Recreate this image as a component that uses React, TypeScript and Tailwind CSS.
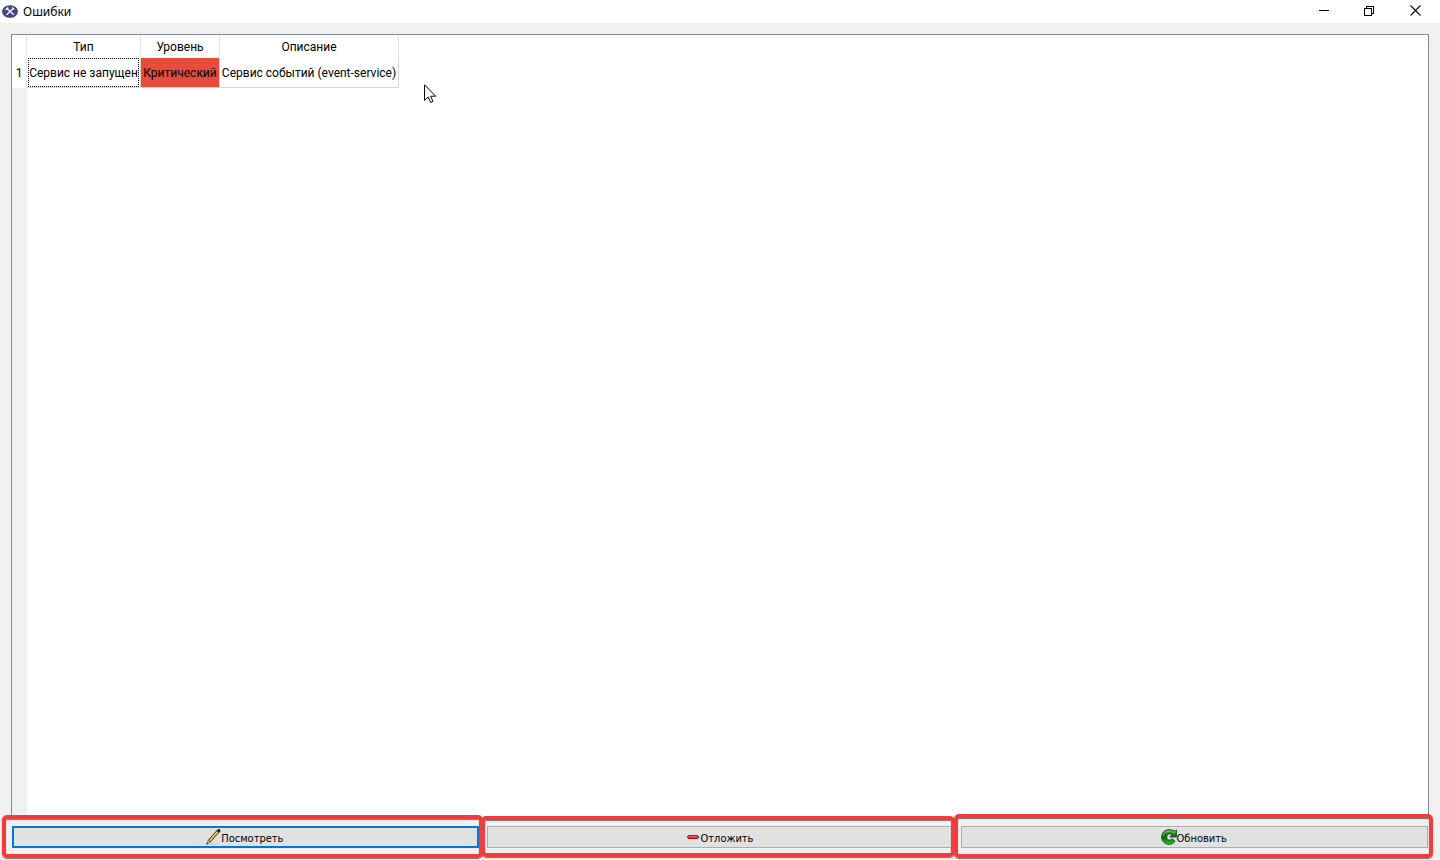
import React from "react";

const rows = [
    {
        type: "Сервис не запущен",
        level: "Критический",
        description: "Сервис событий (event-service)",
    },
];

function AppIcon() {
    return (
        <svg width="16" height="14" viewBox="0 0 16 14" aria-hidden="true">
            <ellipse cx="8" cy="6.500" rx="8" ry="6.3" fill="#45457d" />
            <path d="M5 3.500l6.8 6.2M11.200 3.500L4.600 9.700" stroke="#f4f4fa" strokeWidth="1.4" />
            <path d="M3.8 4.900l2.4-2.4M10.200 2.500l1.800 2" stroke="#f4f4fa" strokeWidth="1.5" />
        </svg>
    );
}

function PencilIcon() {
    return (
        <svg width="16" height="16" viewBox="0 0 16 16" aria-hidden="true">
            <path d="M4 15.300h6l3-1" stroke="#c9c9c9" fill="none" />
            <path d="M3.300 11.2L12.2 1.2l2 1.700L5.400 12.900z" fill="#d9a62e" stroke="#3c2f10" strokeWidth=".9" />
            <path d="M4.400 11.900l8.400-9.500" stroke="#fbe28b" strokeWidth=".9" />
            <path d="M11.5 1.8L13.200 0h1.3l.8 1v1.2l-1.4 1.6z" fill="#252525" />
            <path d="M3.300 11.2l2.100 1.900L1.700 15.2z" fill="#e8cfa0" stroke="#4a3b1d" strokeWidth=".6" />
            <path d="M1.400 15.400l.7-1.6 1 .9z" fill="#111" />
        </svg>
    );
}

function MinusIcon() {
    return (
        <svg width="16" height="16" viewBox="0 0 16 16" aria-hidden="true">
            <rect x="2.500" y="6.500" width="11" height="3" rx="1.500" fill="#e02a35" stroke="#b8101c" />
            <path d="M4 7.500h8" stroke="#ee6b70" />
        </svg>
    );
}

function RefreshIcon() {
    return (
        <svg width="16" height="16" viewBox="0 0 16 16" aria-hidden="true">
            <defs>
                <linearGradient id="leaf" x1="0" y1="0" x2="0" y2="1">
                    <stop offset="0" stopColor="#4fa552" />
                    <stop offset=".5" stopColor="#0d5c15" />
                    <stop offset="1" stopColor="#22cf1c" />
                </linearGradient>
            </defs>
            <path
                d="M13.2 2.2L15.6.9V8H8.8l2.100-2.100C10.300 5.200 9.500 4.900 8.600 4.900 6.900 4.900 5.700 6.300 5.700 8s1.200 3.100 2.900 3.100c1.100 0 2-.4 2.600-1.200l2.900 2.200c-1.300 2.100-3.400 3.300-6 3.300C3.900 15.400.6 12.200.6 8.100S3.800.6 8 .6c2 0 3.800.5 5.200 1.600z"
                fill="url(#leaf)"
                stroke="#17581b"
                strokeWidth=".9"
            />
            <path d="M2 7C2.500 4 5 2.200 8 2.200c1.900 0 3.400.6 4.500 1.700L14.500 2.700" stroke="#9bd198" strokeWidth=".7" fill="none" />
        </svg>
    );
}

function Pointer() {
    return (
        <svg className="absolute left-[424px] top-[84px]" width="13" height="20" viewBox="0 0 13 20" aria-hidden="true">
            <path d="M.5.8v15.700l3.700-3.500 2.500 5.500 2.300-1-2.400-5.300h5.100z" fill="#fff" stroke="#000" />
        </svg>
    );
}

const captionButton = "flex h-[21px] w-[46px] items-center justify-center";

function TitleBar() {
    return (
        <header className="flex h-[23px] items-center justify-between bg-white pl-[2px]">
            <div className="flex items-center gap-[5px]">
                <AppIcon />
                <h1 className="text-[12px] leading-[16px]">Ошибки</h1>
            </div>
            <div className="flex self-start pr-[2px]">
                <button type="button" aria-label="Свернуть" className={captionButton}>
                    <svg width="12" height="10" shapeRendering="crispEdges">
                        <path d="M2 4.500h10" stroke="#000" />
                    </svg>
                </button>
                <button type="button" aria-label="Восстановить" className={captionButton}>
                    <svg width="10" height="10" fill="none" stroke="#000" shapeRendering="crispEdges">
                        <path d="M.5 2.500h7v7h-7zM2.500 2V.5h7v7H8" />
                    </svg>
                </button>
                <button type="button" aria-label="Закрыть" className={captionButton}>
                    <svg width="11" height="11" stroke="#000" strokeWidth="1.100">
                        <path d="M.5.5l10 10M10.500.5l-10 10" />
                    </svg>
                </button>
            </div>
        </header>
    );
}

function ErrorTable() {
    return (
        <table className="w-[387px] table-fixed border-separate border-spacing-0 text-center font-[Roboto,'Noto_Sans',sans-serif] text-[12px] leading-[16px]">
            <colgroup>
                <col className="w-[15px]" />
                <col className="w-[114px]" />
                <col className="w-[79px]" />
                <col className="w-[179px]" />
            </colgroup>
            <thead>
                <tr className="h-[23px]">
                    <td className="border-r border-[#e5e5e5] p-0"></td>
                    <th scope="col" className="border-r border-[#e5e5e5] p-0 font-normal">Тип</th>
                    <th scope="col" className="border-r border-[#e5e5e5] p-0 font-normal">Уровень</th>
                    <th scope="col" className="border-r border-[#e5e5e5] p-0 font-normal">Описание</th>
                </tr>
            </thead>
            <tbody>
                {rows.map((row, i) => (
                    <tr key={row.description} className="h-[30px] whitespace-nowrap">
                        <th scope="row" className="border-r border-[#e5e5e5] p-0 font-normal">{i + 1}</th>
                        <td className="border-b border-r border-[#d8d8d8] p-0">
                            <div className="mx-px flex h-[29px] items-center justify-center border border-dotted border-black">
                                {row.type}
                            </div>
                        </td>
                        <td className="border-b border-r border-[#d8d8d8] bg-[#e74c3c] bg-clip-padding p-0">{row.level}</td>
                        <td className="border-b border-r border-[#d8d8d8] p-0">{row.description}</td>
                    </tr>
                ))}
            </tbody>
        </table>
    );
}

const frame = "pointer-events-none absolute rounded-[5px] border-4 border-[#f23c3c] shadow-[0_1px_1px_#777,inset_0_1px_1px_#777]";
const action = "flex h-[22px] w-full items-center justify-center bg-[#e1e1e1] pr-[2px] font-['DejaVu_Sans_Condensed','DejaVu_Sans',sans-serif] text-[11px] leading-[16px]";
const label = "pt-[3px]";

function Actions() {
    return (
        <footer className="grid grid-cols-3 gap-2 px-px">
            <div className="relative">
                <button type="button" className={`${action} border-2 border-[#0078d7]`}>
                    <PencilIcon />
                    <span className={label}>Посмотреть</span>
                </button>
                <span className={`${frame} -bottom-[10px] -left-[10px] -right-[4px] -top-[11px]`}></span>
            </div>
            <div className="relative">
                <button type="button" className={`${action} border border-[#adadad]`}>
                    <MinusIcon />
                    <span className={label}>Отложить</span>
                </button>
                <span className={`${frame} -bottom-[9px] -left-[6px] -right-[2px] -top-[10px]`}></span>
            </div>
            <div className="relative">
                <button type="button" className={`${action} border border-[#adadad]`}>
                    <RefreshIcon />
                    <span className={label}>Обновить</span>
                </button>
                <span className={`${frame} -bottom-[10px] -left-[7px] -right-[5px] -top-[12px]`}></span>
            </div>
        </footer>
    );
}

function App() {
    return (
        <div className="relative flex min-h-screen flex-col bg-[#f0f0f0] font-['Noto_Sans','Open_Sans',sans-serif] text-black">
            <TitleBar />
            <main className="flex flex-1 flex-col gap-[7px] px-[11px] pb-3 pt-[11px]">
                <section className="flex flex-1 flex-col border border-[#828790] bg-white">
                    <ErrorTable />
                    <div className="w-[15px] flex-1 bg-[#f0f0f0]"></div>
                </section>
                <Actions />
            </main>
            <Pointer />
        </div>
    );
}

export default App;
